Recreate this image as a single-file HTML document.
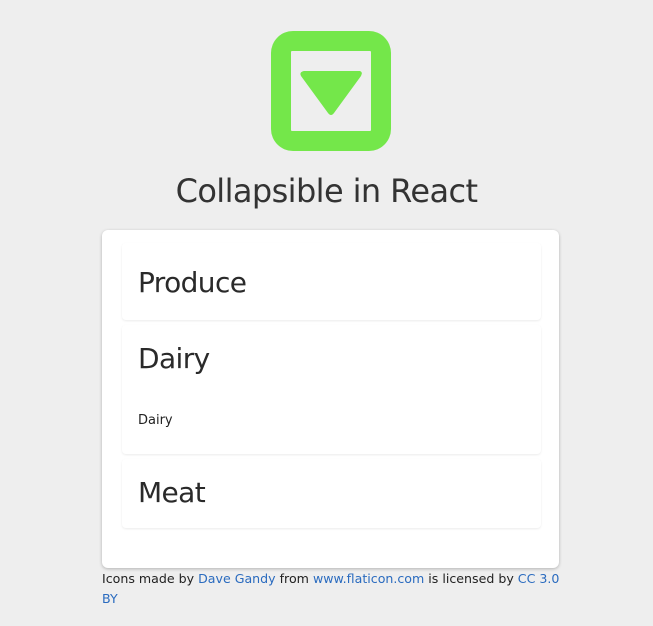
<!DOCTYPE html>
<html><head><meta charset="utf-8"><style>
body{margin:0;background:#eeeeee;font-family:"DejaVu Sans","Liberation Sans",sans-serif;color:#333;width:653px;height:626px;overflow:hidden;position:relative}
.icon{position:absolute;left:271px;top:31px}
h1{position:absolute;left:0;width:653px;top:168px;margin:0;text-align:center;font-weight:normal;font-size:32px;letter-spacing:-0.6px;line-height:46px}
.card{position:absolute;left:102px;top:230px;width:457px;height:338px;background:#fff;border-radius:6px;box-shadow:0 1px 3px rgba(0,0,0,.25)}
.p{position:absolute;left:20px;width:419px;background:#fff;border-radius:4px;box-shadow:0 1px 2px rgba(0,0,0,.08)}
.p h2{position:absolute;left:16px;margin:0;font-weight:normal;font-size:28px;letter-spacing:-0.6px;line-height:34px;color:#2a2a2a}
.p .t{position:absolute;left:16px;font-size:13px;color:#222}
.foot{position:absolute;left:102px;top:569px;width:460px;font-size:12.6px;line-height:20px;color:#222}
.foot a{color:#2a6bbf;text-decoration:none}
</style></head><body>
<svg class="icon" width="120" height="120" viewBox="0 0 120 120">
<rect x="0" y="0" width="120" height="120" rx="22" fill="#74e74a"/>
<rect x="20" y="20" width="80" height="80" rx="1" fill="#eeeeee"/>
<path d="M33 40 L89 40 Q92 41 90 45 L63 82 Q60 86 57 82 L30 45 Q28 41 33 40 Z" fill="#74e74a"/>
</svg>
<h1>Collapsible in React</h1>
<div class="card">
<div class="p" style="top:13px;height:77px"><h2 style="top:23px">Produce</h2></div>
<div class="p" style="top:95px;height:129px"><h2 style="top:17px">Dairy</h2><div class="t" style="top:88px">Dairy</div></div>
<div class="p" style="top:229px;height:69px"><h2 style="top:17px">Meat</h2></div>
</div>
<div class="foot">Icons made by <a>Dave Gandy</a> from <a>www.flaticon.com</a> is licensed by <a>CC 3.0 BY</a></div>
</body></html>
